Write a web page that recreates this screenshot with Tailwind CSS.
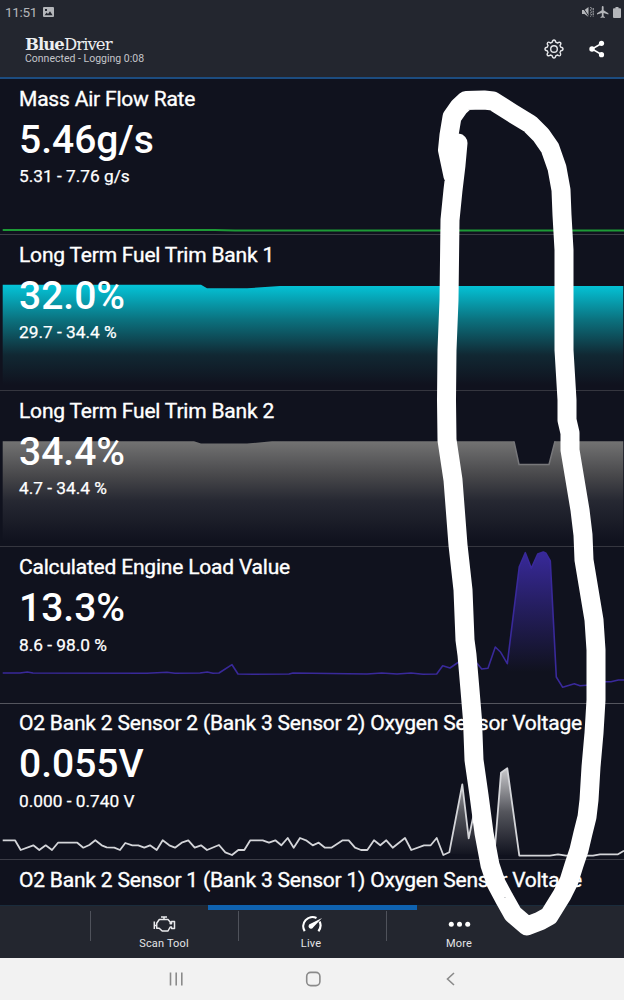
<!DOCTYPE html>
<html lang="en">
<head>
    <meta charset="UTF-8">
    <meta name="viewport" content="width=device-width, initial-scale=1.0">
    <title>BlueDriver Live Data</title>
    <script src="https://cdn.jsdelivr.net/npm/@tailwindcss/browser@4"></script>
</head>
<body class="font-['Roboto',sans-serif] bg-[#10121e] text-white">
    <div class="relative w-[624px] h-[1000px] overflow-hidden flex flex-col">

        <!-- Status bar + app header -->
        <header class="h-[79px] shrink-0 bg-[#23262f] border-b-2 border-[#1c4c80]">
            <div class="h-6 pl-[5px] pr-[3px] flex items-center justify-between text-[#b4b6ba]">
                <div class="flex items-center gap-[6px]">
                    <span class="text-[13.5px] leading-6 tracking-[-0.3px]">11:51</span>
                    <svg class="w-[11px] h-[10px]" viewBox="0 0 11 10"><path fill="currentColor" fill-rule="evenodd" d="M1 0h9a1 1 0 0 1 1 1v8a1 1 0 0 1-1 1H1a1 1 0 0 1-1-1V1a1 1 0 0 1 1-1zM1.600 8.200h8L7 4.200 5 6.900 3.600 5.400zM2 2v2h2V2z"/></svg>
                </div>
                <div class="flex items-center gap-[3px]">
                    <svg class="w-3 h-3" viewBox="0 0 12 12"><path fill="currentColor" d="M0 4h2.500L6.500 1v10L2.500 8H0z"/><path d="M0 .5l7.500 11" stroke="#23262f" stroke-width="1"/><path d="M8.500 1l1 1.600-1 1.600 1 1.600-1 1.600 1 1.600-1 1.600M11.200 2v8.500" fill="none" stroke="currentColor" stroke-dasharray="2 .6"/></svg>
                    <svg class="w-3 h-3" viewBox="2 2 20 20"><path fill="currentColor" d="M21 16v-2l-8-5V3.500a1.500 1.500 0 0 0-3 0V9l-8 5v2l8-2.500V19l-2 1.500V22l3.500-1 3.500 1v-1.500L13 19v-5.500z"/></svg>
                    <svg class="w-2 h-[11px] ml-px" viewBox="0 0 8 11"><path fill="currentColor" d="M2.500 0h3v1.200H7a1 1 0 0 1 1 1V10a1 1 0 0 1-1 1H1a1 1 0 0 1-1-1V2.200a1 1 0 0 1 1-1h1.500z"/></svg>
                </div>
            </div>
            <div class="h-[53px] pl-[25px] pr-[18px] flex justify-between">
                <div class="pt-[11px]">
                    <div class="font-['DejaVu_Serif',serif] text-[16.5px] leading-[19px] -mb-px tracking-[-0.95px] text-[#eceef0]"><span class="font-bold">Blue</span>Driver</div>
                    <div class="text-[10.5px] leading-[11px] text-[#c3c5ca]">Connected - Logging 0:08</div>
                </div>
                <div class="flex items-start gap-6 pt-[15px]">
                    <svg class="w-5 h-5" viewBox="0 0 20 20" fill="none" stroke="#e6e7ea" stroke-width="1.4" stroke-linejoin="round"><circle cx="10" cy="10" r="3.300"/><path d="M8.300 3.200Q8.500 1 10 1t1.700 2.200l1.900.8q1.700-1.400 2.800-.4t-.4 2.800l.8 1.900Q19 8.500 19 10t-2.200 1.700l-.8 1.900q1.400 1.700.4 2.800t-2.800-.4l-1.900.8Q11.500 19 10 19t-1.700-2.200L6.400 16q-1.700 1.400-2.800.4T4 13.600l-.8-1.900Q1 11.500 1 10t2.200-1.700L4 6.400Q2.600 4.700 3.600 3.600T6.400 4z"/></svg>
                    <svg class="w-[18px] h-5" viewBox="0 0 18 20"><path d="M13.500 4.500 4 10l9.500 5.500" fill="none" stroke="#fff" stroke-width="1.5"/><g fill="#fff"><circle cx="13.500" cy="4.300" r="2.600"/><circle cx="4" cy="10" r="2.700"/><circle cx="13.500" cy="15.700" r="2.600"/></g></svg>
                </div>
            </div>
        </header>

        <!-- Live data rows -->
        <main class="h-[826px] shrink-0 overflow-hidden">
            <section class="relative h-[156px] pl-[19px] pt-[6px] border-b border-[#3c3d47]">
                <svg class="absolute left-0 top-0 w-[624px] h-[156px]" viewBox="0 0 624 156">
                    <path d="M2.700 151H215L235 151.500H624" fill="none" stroke="#1d9a36" stroke-width="2"/>
                </svg>
                <h2 class="relative text-[21px] leading-7 mb-px tracking-[-0.2px] [-webkit-text-stroke:0.35px_white] whitespace-nowrap">Mass Air Flow Rate</h2>
                <p class="relative text-[39px] leading-[52px] font-medium">5.46g/s</p>
                <p class="relative -mt-px text-[17.3px] leading-[22px] [-webkit-text-stroke:0.25px_white]">5.31 - 7.76 g/s</p>
            </section>

            <section class="relative h-[156px] pl-[19px] pt-[6px] border-b border-[#35363f]">
                <svg class="absolute left-0 top-0 w-[624px] h-[156px]" viewBox="0 0 624 156">
                    <defs>
                        <linearGradient id="cyan" gradientUnits="userSpaceOnUse" x1="0" y1="50" x2="0" y2="150">
                            <stop offset="0" stop-color="#04c4d8"/>
                            <stop offset=".35" stop-color="#0b717e"/>
                            <stop offset=".7" stop-color="#112833"/>
                            <stop offset="1" stop-color="#10121e"/>
                        </linearGradient>
                    </defs>
                    <path d="M2.700 49.700H201L207 53.300H247L280 51H623.300V155H2.700z" fill="url(#cyan)"/>
                </svg>
                <h2 class="relative text-[21px] leading-7 mb-px tracking-[-0.2px] [-webkit-text-stroke:0.35px_white] whitespace-nowrap">Long Term Fuel Trim Bank 1</h2>
                <p class="relative text-[39px] leading-[52px] font-medium">32.0%</p>
                <p class="relative -mt-px text-[17.3px] leading-[22px] [-webkit-text-stroke:0.25px_white]">29.7 - 34.4 %</p>
            </section>

            <section class="relative h-[156px] pl-[19px] pt-[6px] border-b border-[#35363f]">
                <svg class="absolute left-0 top-0 w-[624px] h-[156px]" viewBox="0 0 624 156">
                    <defs>
                        <linearGradient id="grey" gradientUnits="userSpaceOnUse" x1="0" y1="50" x2="0" y2="150">
                            <stop offset="0" stop-color="#737373"/>
                            <stop offset=".35" stop-color="#47474a"/>
                            <stop offset=".6" stop-color="#262832"/>
                            <stop offset="1" stop-color="#10121e"/>
                        </linearGradient>
                    </defs>
                    <path d="M2.700 50.300H194L201 52.500H247L272 50.300H514L519 73.500H549L555 50.300H623.300V155H2.700z" fill="url(#grey)"/>
                    <path d="M514 50.300 519 73.500H549L555 50.300" fill="none" stroke="#77777a" stroke-width="1.5"/>
                </svg>
                <h2 class="relative text-[21px] leading-7 mb-px tracking-[-0.2px] [-webkit-text-stroke:0.35px_white] whitespace-nowrap">Long Term Fuel Trim Bank 2</h2>
                <p class="relative text-[39px] leading-[52px] font-medium">34.4%</p>
                <p class="relative -mt-px text-[17.3px] leading-[22px] [-webkit-text-stroke:0.25px_white]">4.7 - 34.4 %</p>
            </section>

            <section class="relative h-[157px] pl-[19px] pt-[6px] border-b border-[#54555e]">
                <svg class="absolute left-0 top-0 w-[624px] h-[156px]" viewBox="0 0 624 156">
                    <defs>
                        <linearGradient id="violet" gradientUnits="userSpaceOnUse" x1="0" y1="5" x2="0" y2="125">
                            <stop offset="0" stop-color="#38299a"/>
                            <stop offset=".45" stop-color="#251e60"/>
                            <stop offset="1" stop-color="#10121e"/>
                        </linearGradient>
                    </defs>
                    <path d="M507.300 116.700 519.300 19.700 525.300 5.700 531.300 21.300 537.700 7 543.300 5 546 6.300 550.300 14 556.300 130H507z" fill="url(#violet)"/>
                    <path d="M2.700 126H20L27.300 125 33 126 147 126.300 167 125.300 175 126.300 200 126 207.300 125 213 126.300 219 126 232 117.700 238 127 253 127.300 289 127 293 126 367 127 381.700 126 397 127 411 126 423 127.300 436.700 127 442.700 118.700 450 121 458.700 115 468 110 477 116.300 481.700 122 488 121.300 495.300 100 500.700 105.300 507.300 116.700 519.300 19.700 525.300 5.700 531.300 21.300 537.700 7 543.300 5 546 6.300 550.300 14 556.300 130 562.700 140.300 574.300 136.700 580 138.700 590 138 605.700 134.700H611L618.300 133H624" fill="none" stroke="#39299a" stroke-width="1.6" stroke-linejoin="round"/>
                </svg>
                <h2 class="relative text-[21px] leading-7 mb-px tracking-[-0.2px] [-webkit-text-stroke:0.35px_white] whitespace-nowrap">Calculated Engine Load Value</h2>
                <p class="relative text-[39px] leading-[52px] font-medium">13.3%</p>
                <p class="relative text-[17.3px] leading-[22px] [-webkit-text-stroke:0.25px_white]">8.6 - 98.0 %</p>
            </section>

            <section class="relative h-[156px] pl-[19px] pt-[5px] border-b border-[#3c3d47]">
                <svg class="absolute left-0 top-0 w-[624px] h-[156px]" viewBox="0 0 624 156">
                    <defs>
                        <linearGradient id="white" gradientUnits="userSpaceOnUse" x1="0" y1="64" x2="0" y2="152">
                            <stop offset="0" stop-color="#c9c9cc"/>
                            <stop offset=".5" stop-color="#54555c"/>
                            <stop offset="1" stop-color="#10121e"/>
                        </linearGradient>
                    </defs>
                    <path d="M449.300 150 462.300 80.300 468.700 134.300 474 109 484 100 495 142.700 501 68.700 507.300 64.300 519.300 151.700z" fill="url(#white)"/>
                    <path d="M2.700 136.300H15L20.700 146 33.300 141.300 39.300 146 45.700 141.300 52 146 58 138.700H77.300L83.300 143.700 89.300 141 95.300 136.300 101.700 141.300 106.700 143.300 114.300 143.700 120 146 125.300 139 132.300 141.300H138.300L144.300 143.700 150 141.300 156.700 146 162.700 136.300 169.300 141.300 175 143.700 181.700 138.700 188.300 136.300 194.700 143.700 201 141.300 207 146 219 141 225.300 148.300 232 151 238.300 146H244.300L250.300 136.300H262.700L269 138.700 275.300 136.300 281.300 141.300 287.700 134 293.700 143.700 300 134 306 136.300 312.700 141.300 318.700 138.700 325 143.700H331.300L342.700 136.300H348.700L355 143.700 361 146H367.300L374 136.300 380.300 141.300 386.300 136.300 392.700 143.700 405 134 411.300 146 424 141.300H430.700L436.700 134 443.300 151 449.300 148.300 462.300 80.300 468.700 134.300 474 109 484 100 495 142.700 501 68.700 507.300 64.300 519.300 151.700H550L558 150.300 566 151.700H593L600 150.300H618L624 146.700" fill="none" stroke="#d4d5d9" stroke-width="1.8" stroke-linejoin="round"/>
                </svg>
                <h2 class="relative text-[21px] leading-7 mb-px tracking-[-0.2px] [-webkit-text-stroke:0.35px_white] whitespace-nowrap">O2 Bank 2 Sensor 2 (Bank 3 Sensor 2) Oxygen Sensor Voltage</h2>
                <p class="relative text-[39px] leading-[52px] font-medium">0.055V</p>
                <p class="relative text-[17.3px] leading-[22px] [-webkit-text-stroke:0.25px_white]">0.000 - 0.740 V</p>
            </section>

            <section class="pl-[19px] pt-[6px]">
                <h2 class="text-[21px] leading-7 tracking-[-0.2px] [-webkit-text-stroke:0.35px_white] whitespace-nowrap">O2 Bank 2 Sensor 1 (Bank 3 Sensor 1) Oxygen Sensor Voltage</h2>
            </section>
        </main>

        <!-- Tab bar -->
        <nav class="relative h-[53px] shrink-0 bg-[#23262f] border-t border-[#1a2c3c] pl-[90px] flex text-[11px] tracking-[0.15px] text-[#e4e5e8]">
            <div class="absolute left-[208px] -top-px w-[209px] h-[5px] bg-[#0f62b0]"></div>
            <div class="w-[148px] flex">
                <div class="w-px h-[30px] mt-[5px] bg-[#4f525b]"></div>
                <div class="flex-1 flex flex-col items-center pt-[9px] pr-px">
                    <svg class="w-[23px] h-[18px]" viewBox="0 0 23 18" fill="none" stroke="#e8e9ec" stroke-width="1.5" stroke-linejoin="round"><path d="M8 2h6M11 2v2.200M6.300 4.500H15l2.200 2.500v1.700h1.300V6.500h3v7h-3V12h-1.300L15 16H9.200L6.200 13.200H3.700V8.200z"/><path d="M1.300 6.500v7.500M1.300 10.500h2.400"/></svg>
                    <span class="leading-[14px] mt-1">Scan Tool</span>
                </div>
            </div>
            <div class="w-[148px] flex">
                <div class="w-px h-[30px] mt-[5px] bg-[#4f525b]"></div>
                <div class="flex-1 flex flex-col items-center pt-[9px] pr-[3px]">
                    <svg class="w-[23px] h-[18px]" viewBox="0 0 23 18"><path d="M4.700 16.200A9.200 9.200 0 0 1 16.500 3M19.600 6.500A9.200 9.200 0 0 1 18.400 16.200" fill="none" stroke="#fff" stroke-width="2.2"/><path d="M22 3 13.300 12.300a2.500 2.500 0 1 1-2.800-3.500z" fill="#fff"/></svg>
                    <span class="leading-[14px] mt-1">Live</span>
                </div>
            </div>
            <div class="w-[148px] flex">
                <div class="w-px h-[30px] mt-[5px] bg-[#4f525b]"></div>
                <div class="flex-1 flex flex-col items-center pt-[9px] pr-[3px]">
                    <svg class="w-[23px] h-[18px]" viewBox="0 0 23 18" fill="#fff"><circle cx="3.300" cy="9.300" r="2.500"/><circle cx="11.500" cy="9.300" r="2.500"/><circle cx="19.700" cy="9.300" r="2.500"/></svg>
                    <span class="leading-[14px] mt-1">More</span>
                </div>
            </div>
        </nav>

        <!-- Android navigation -->
        <footer class="h-[42px] shrink-0 bg-[#f2f2f2] pl-[168px] flex items-center">
            <svg class="w-4 h-4" viewBox="0 0 16 16" stroke="#8a8a8a" stroke-width="1.6"><path d="M2.500 1.500v13M8.200 1.500v13M13.800 1.500v13"/></svg>
            <svg class="w-4 h-4 ml-[121px]" viewBox="0 0 16 16" fill="none" stroke="#8a8a8a" stroke-width="1.6"><rect x="1.700" y="1.400" width="13.200" height="13.200" rx="4"/></svg>
            <svg class="w-4 h-4 ml-[121px]" viewBox="0 0 16 16" fill="none" stroke="#8a8a8a" stroke-width="1.6"><path d="M12 2 5.500 8l6.500 6"/></svg>
        </footer>

        <!-- Freehand marker loop -->
        <svg class="absolute inset-0 w-[624px] h-[1000px] pointer-events-none" viewBox="0 0 624 1000">
            <path d="M458 143 456 165 453 190 450 220 449 300 447 350 446.500 400 447 440 453 480 458 545 463 590 465 640 467 655 470 690 472.500 720 474 760 479 795 484 833 490 865 496 883 504 898 513 914 527 926 540 921 549 916 562 895 569 881 574 865 579 850 583 833 587 817 589 800 591 767 594 733 596 700 596 650 594 620 589 590 584 560 583 535 580 510 575 480 570 450 570 433 567 420 567 400 564 350 564 250 562 215 561 190 557 168 550 148 541 135 530 124 512 113 493 101 484 100 466 100.500 459 107 452 117 449 135 447.500 150 453 176" fill="none" stroke="#fff" stroke-width="19" stroke-linecap="round" stroke-linejoin="round"/>
        </svg>
    </div>
</body>
</html>
